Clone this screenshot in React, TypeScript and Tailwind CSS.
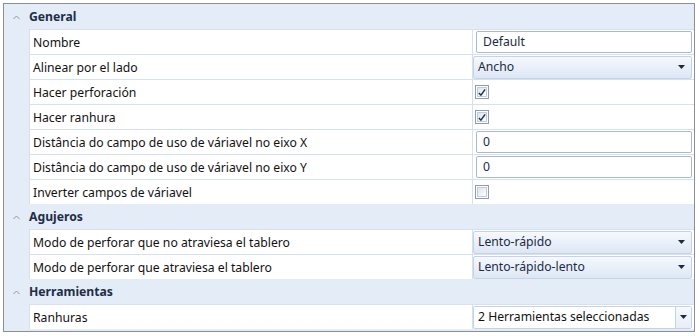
import React from 'react';

type Row =
  | { kind: 'header'; label: string }
  | { kind: 'text'; label: string; value: string }
  | { kind: 'combo'; label: string; value: string }
  | { kind: 'multi'; label: string; value: string }
  | { kind: 'check'; label: string; checked: boolean };

const rows: Row[] = [
  { kind: 'header', label: 'General' },
  { kind: 'text', label: 'Nombre', value: 'Default' },
  { kind: 'combo', label: 'Alinear por el lado', value: 'Ancho' },
  { kind: 'check', label: 'Hacer perforación', checked: true },
  { kind: 'check', label: 'Hacer ranhura', checked: true },
  { kind: 'text', label: 'Distância do campo de uso de váriavel no eixo X', value: '0' },
  { kind: 'text', label: 'Distância do campo de uso de váriavel no eixo Y', value: '0' },
  { kind: 'check', label: 'Inverter campos de váriavel', checked: false },
  { kind: 'header', label: 'Agujeros' },
  { kind: 'combo', label: 'Modo de perforar que no atraviesa el tablero', value: 'Lento-rápido' },
  { kind: 'combo', label: 'Modo de perforar que atraviesa el tablero', value: 'Lento-rápido-lento' },
  { kind: 'header', label: 'Herramientas' },
  { kind: 'multi', label: 'Ranhuras', value: '2 Herramientas seleccionadas' },
];

const Arrow = () => (
  <svg width="7" height="4" viewBox="0 0 7 4" className="shrink-0">
    <path d="M0 0h7L3.5 4z" fill="#1e2b3c" />
  </svg>
);

const Chevron = () => (
  <svg width="7" height="5" viewBox="0 0 7 5">
    <path d="M0.5 4L3.5 1L6.5 4" fill="none" stroke="#8a96a8" strokeWidth="1" />
  </svg>
);

const Check = ({ checked }: { checked: boolean }) => (
  <div className="w-[14px] h-[14px] border border-[#8f9cb3] p-[1px] ml-[2px]">
    <div className="w-full h-full border border-[#c3cbd9] bg-gradient-to-br from-[#dde3ee] to-[#ffffff] flex items-center justify-center">
      {checked && (
        <svg width="9" height="9" viewBox="0 0 9 9">
          <path d="M1 5l2.3 2.5L8 1" fill="none" stroke="#1e3350" strokeWidth="1.7" />
        </svg>
      )}
    </div>
  </div>
);

const Value = ({ row }: { row: Row }) => {
  if (row.kind === 'text')
    return (
      <div className="h-[22px] w-full ml-[3px] mr-[2px] border border-[#abb9d0] rounded-[2px] bg-white flex items-center pl-[6px] pt-[1px] text-[#1b2a44]">
        {row.value}
      </div>
    );
  if (row.kind === 'combo')
    return (
      <div className="h-[23px] w-full mr-[2px] border border-[#c6d2e5] rounded-[2px] bg-gradient-to-b from-[#f6f9fd] to-[#dde7f5] flex items-center pl-[4px] pr-[6px] text-[#1b2a44]">
        <span className="flex-1 pt-[1px]">{row.value}</span>
        <Arrow />
      </div>
    );
  if (row.kind === 'multi')
    return (
      <div className="h-[23px] w-full mr-[2px] border border-[#c6d2e5] rounded-[2px] bg-white flex items-center text-[#111]">
        <span className="flex-1 pl-[4px] pt-[1px]">{row.value}</span>
        <div className="w-[16px] h-full border-l border-[#c6d2e5] bg-gradient-to-b from-[#f7f9fc] to-[#e8eef7] flex items-center justify-center">
          <Arrow />
        </div>
      </div>
    );
  if (row.kind === 'check') return <Check checked={row.checked} />;
  return null;
};

export default function App() {
  return (
    <div className="w-[700px] h-[336px] bg-white pt-[3px] pl-[3px]" style={{ fontFamily: '"Noto Sans", "Open Sans", sans-serif' }}>
      <div className="w-[692px] border border-[#8a8f96] bg-[#e4ecf8] text-[12.2px] pb-[2px]">
        {rows.map((row, i) =>
          row.kind === 'header' ? (
            <div key={i} className="h-[25px] flex items-center">
              <div className="w-[25px] flex justify-center pt-[1px]">
                <Chevron />
              </div>
              <span className="font-bold text-[#1e2e46] pt-[2px]">{row.label}</span>
            </div>
          ) : (
            <div key={i} className="h-[25px] flex">
              <div className="w-[25px]" />
              <div className="flex flex-1 bg-white border-t border-l border-[#d5e0f0]">
                <div className="w-[443px] border-r border-[#d5e0f0] flex items-center pl-[3px] pt-[2px] text-[#111]">
                  {row.label}
                </div>
                <div className="flex-1 flex items-center">
                  <Value row={row} />
                </div>
              </div>
            </div>
          )
        )}
      </div>
    </div>
  );
}
